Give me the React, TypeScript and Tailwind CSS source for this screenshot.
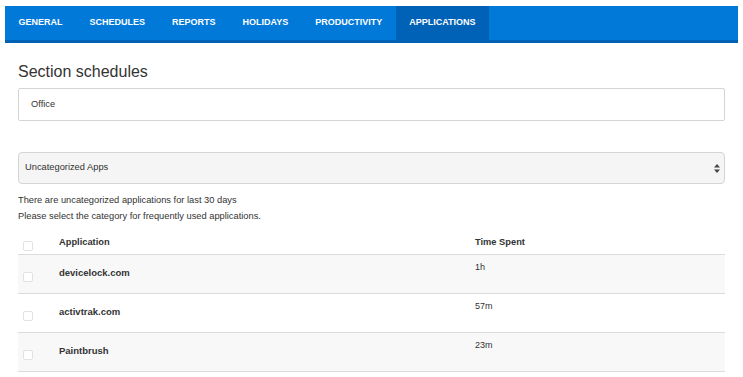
import React from "react";

const tabs = ["General", "Schedules", "Reports", "Holidays", "Productivity", "Applications"];

const apps = [
  { name: "devicelock.com", time: "1h" },
  { name: "activtrak.com", time: "57m" },
  { name: "Paintbrush", time: "23m" },
];

function Check() {
  return <div className="w-[10px] h-[10px] border border-[#e2e2e2] rounded-[2px] bg-white" />;
}

export default function App() {
  return (
    <div className="min-h-screen bg-white font-['Liberation_Sans',Arial,sans-serif] text-[#333]">
      <div className="pt-[6px] px-[5px]">
        <nav className="flex h-[37px] bg-[#0079d8] border-b-[3px] border-[#0062b6]">
          {tabs.map((t) => (
            <div
              key={t}
              className={
                "flex items-center px-[13.5px] text-[9px] font-bold uppercase text-white " +
                (t === "Applications" ? "bg-[#0062b6]" : "")
              }
            >
              {t}
            </div>
          ))}
        </nav>
      </div>

      <div className="px-[18px]">
        <h1 className="mt-[19px] text-[16px] leading-[20px] text-[#333]">Section schedules</h1>

        <div className="mt-[6px] h-[33px] border border-[#d4d4d4] rounded-[2px] flex items-center pl-[12px] text-[9.3px]">
          Office
        </div>

        <div className="mt-[31px] h-[32px] border border-[#d4d4d4] rounded-[4px] bg-[#f5f5f5] flex items-center justify-between pl-[6px] pr-[4px] text-[9.3px]">
          <span>Uncategorized Apps</span>
          <svg width="6" height="9" viewBox="0 0 6 9">
            <path d="M3 0 L6 3.5 L0 3.5 Z" fill="#444" />
            <path d="M3 9 L6 5.5 L0 5.5 Z" fill="#444" />
          </svg>
        </div>

        <p className="mt-[8px] text-[9.3px] leading-[16px]">There are uncategorized applications for last 30 days</p>
        <p className="text-[9.3px] leading-[16px]">Please select the category for frequently used applications.</p>

        <div className="mt-[9px]">
          <div className="flex h-[22px] border-b border-[#dcdcdc] text-[9.3px] font-bold">
            <div className="w-[41px] pl-[5px] pt-[8px]">
              <Check />
            </div>
            <div className="w-[416px] pt-[3px]">Application</div>
            <div className="pt-[3px]">Time Spent</div>
          </div>
          {apps.map((a, i) => (
            <div
              key={a.name}
              className={
                "flex h-[39px] border-b border-[#dcdcdc] " + (i % 2 === 0 ? "bg-[#f8f8f8]" : "bg-white")
              }
            >
              <div className="w-[41px] pl-[5px] pt-[17px]">
                <Check />
              </div>
              <div className="w-[416px] pt-[11px] text-[9.5px] leading-[13px] font-bold">{a.name}</div>
              <div className="pt-[6px] text-[9px] leading-[13px]">{a.time}</div>
            </div>
          ))}
        </div>
      </div>
    </div>
  );
}
